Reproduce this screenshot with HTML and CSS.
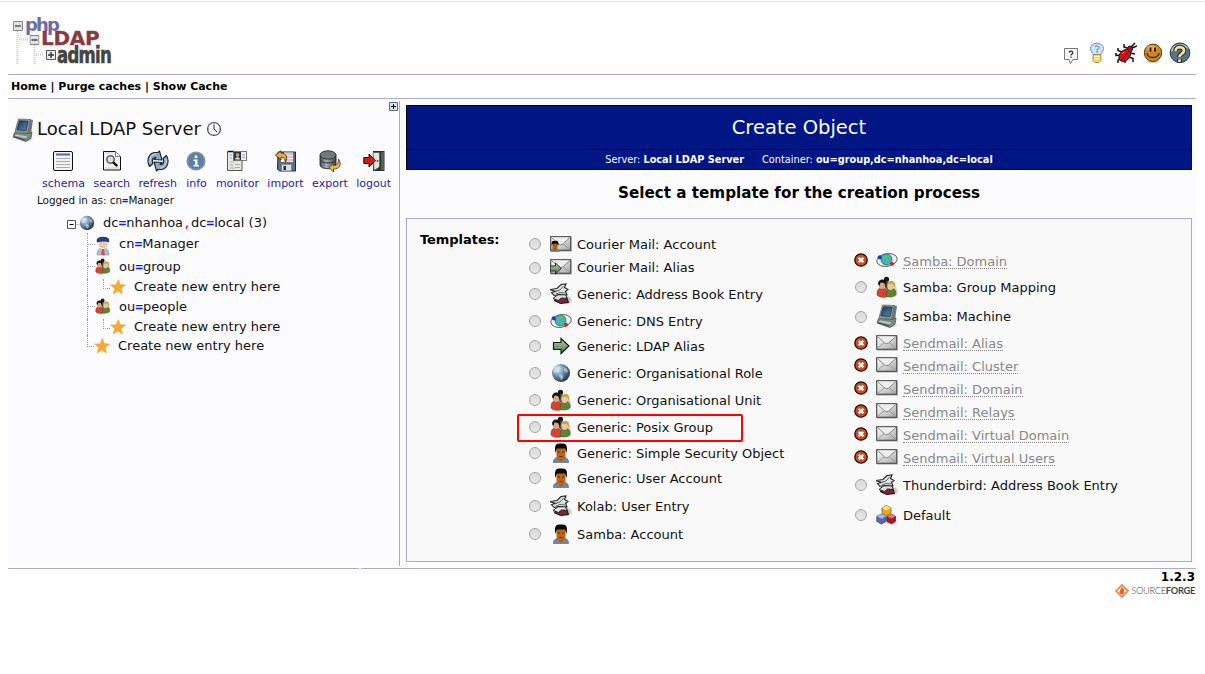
FILE: index.html
```html
<!DOCTYPE html>
<html lang="en">
<head>
<meta charset="utf-8">
<title>phpLDAPadmin</title>
<link rel="stylesheet" href="styles.css">
</head>
<body>
<svg class="sprite" aria-hidden="true">
<defs>
<radialGradient id="gGlobe" cx=".32" cy=".3" r=".8"><stop offset="0" stop-color="#dcecf8"/><stop offset=".45" stop-color="#6f8fb4"/><stop offset="1" stop-color="#142238"/></radialGradient>
<linearGradient id="gMail" x1="0" y1="0" x2="1" y2="1"><stop offset="0" stop-color="#fff"/><stop offset=".5" stop-color="#d5d5d5"/><stop offset="1" stop-color="#a5a5a5"/></linearGradient>
<linearGradient id="gArrow" x1="0" y1="0" x2="0" y2="1"><stop offset="0" stop-color="#b5d0ad"/><stop offset="1" stop-color="#4f7549"/></linearGradient>
<linearGradient id="gDisk" x1="0" y1="0" x2="1" y2="0"><stop offset="0" stop-color="#4c4f52"/><stop offset=".4" stop-color="#a9adb0"/><stop offset="1" stop-color="#404346"/></linearGradient>
<linearGradient id="gScreen" x1="0" y1="0" x2="1" y2="1"><stop offset="0" stop-color="#183a5e"/><stop offset="1" stop-color="#5b88b0"/></linearGradient>
<radialGradient id="gShade"><stop offset="0" stop-color="#000" stop-opacity=".4"/><stop offset="1" stop-color="#000" stop-opacity="0"/></radialGradient>
</defs>
<symbol id="server" viewBox="0 0 22 24"><ellipse cx="14" cy="21" rx="8" ry="3" fill="url(#gShade)"/><path d="M17 1l4 1-2 14-4 2z" fill="#6d7a78"/><path d="M6.500 1L18.500 1.500 15.500 15 3 13.500z" fill="#91a09e" stroke="#56615f" stroke-width=".7"/><path d="M7.500 2.800l8.700.4-2.300 9.500-9-1z" fill="url(#gScreen)" stroke="#17283a" stroke-width=".7"/><path d="M2.500 14.500l14 1 3.500-1.500-1 6-5 3.500L1 19z" fill="#7d8884" stroke="#3f4a48" stroke-width=".7"/><path d="M2.500 17.500l11 2.800 2-1.800-11.500-2z" fill="#c3ccc6"/><path d="M2 19l11.500 3" stroke="#35403f" stroke-width=".8"/></symbol>
<symbol id="schema" viewBox="0 0 22 22"><rect x="1.500" y="1.500" width="19" height="19" rx="1.500" fill="#f2f2ee" stroke="#111"/><path d="M4 4.500h14" stroke="#526b95" stroke-width="2"/><path d="M4 8.500h14M4 11.500h14M4 14.500h14M4 17.500h14" stroke="#aaa" stroke-width="1.200"/></symbol>
<symbol id="search" viewBox="0 0 22 22"><path d="M2.500 1.500h12l5 5v13.500h-17z" fill="#f4f4f0" stroke="#111"/><path d="M14.500 1.500v5h5" fill="#fff" stroke="#777"/><path d="M4 3h8M4 18h14" stroke="#ccc"/><circle cx="9.500" cy="9.500" r="3.700" fill="#d7e0e5" stroke="#666" stroke-width="1.600"/><path d="M12 12.200l4.300 4" stroke="#111" stroke-width="2.400"/></symbol>
<symbol id="refresh" viewBox="0 0 22 22"><g fill="#8fa9c0" stroke="#18222c" stroke-width="1.100" stroke-linejoin="round"><path d="M2.500 16.500C-1.500 9 3 2.500 8 2.500h3l1.500-1.500 2.500 9-8-.5 2-2c-3-.5-4.500 2-3 6z"/><path d="M19.500 5.500c4 7.500-.5 14-5.500 14h-3L9.500 21 7 12l8 .5-2 2c3 .5 4.500-2 3-6z"/></g><path d="M3 13c-1-5 2-9 6-9M19 9c1 5-2 9-6 9" fill="none" stroke="#d5e2ed" stroke-width=".9"/></symbol>
<symbol id="info" viewBox="0 0 22 22"><circle cx="11" cy="11" r="8.800" fill="#5b7fa9" stroke="#8d949b" stroke-width="1.600"/><circle cx="11" cy="6.700" r="1.500" fill="#fff"/><path d="M8.500 9.500h4V15H14v1.500H8.500V15H10v-4H8.500z" fill="#fff"/></symbol>
<symbol id="monitor" viewBox="0 0 22 22"><path d="M1.500 1.500h9v8.500h5.500v10.500h-14.500z" fill="#e7e7e2" stroke="#555"/><path d="M2 1.500h7" stroke="#111" stroke-width="1.500"/><rect x="7.500" y="1.500" width="13" height="9" fill="#efefea" stroke="#77776f"/><rect x="8" y="2" width="7" height="8" fill="#16354f"/><circle cx="11.500" cy="5" r="1.900" fill="#c79a6a"/><path d="M9 9.500c.5-3 4.500-3 5 0z" fill="#dde6ea"/><path d="M16 5h3M16 7.500h3M4 5h2M4 8h2M4 12h4M4 15h3M4 18h4M9 14.500h5M9 17.500h5" stroke="#aaa"/></symbol>
<symbol id="import" viewBox="0 0 22 22"><path d="M3 2h17.500v19H4.500L2.500 19z" fill="#55738b" stroke="#192a39"/><path d="M9 2.500h9V12H6V8z" fill="#fff"/><path d="M11 4h7M11 7h7M9 10h9" stroke="#e0777b"/><rect x="6.500" y="14.500" width="10" height="6.500" fill="#ddd" stroke="#888"/><rect x="8.500" y="16" width="2.500" height="4" fill="#234"/><path d="M.5 5L6 .8V3c5.500.2 7 4 4.500 9.500-.3-4-1.500-5.200-4.500-5.200V10z" fill="#e6ad45" stroke="#4c340c"/></symbol>
<symbol id="export" viewBox="0 0 22 22"><path d="M1 5v10c0 5 16 5 16 0V5z" fill="url(#gDisk)" stroke="#222" stroke-width=".8"/><path d="M1 9.500c1 4.500 15 4.500 16 0" fill="none" stroke="#333"/><ellipse cx="9" cy="5" rx="8" ry="4.200" fill="#737779" stroke="#222" stroke-width=".8"/><path d="M19.500 9c4 6 .5 10-5 10V22L10 17.500l4.500-4v2c3.500.2 5-2 5-6.500z" fill="#e9b652" stroke="#5c4014" stroke-width=".9"/></symbol>
<symbol id="logout" viewBox="0 0 22 22"><path d="M10 1h11.500v20H10z" fill="#26352a"/><path d="M18 2h3v18h-3z" fill="#4d634f"/><path d="M10 2.500h6.500V17L11 20.500z" fill="#e4e4df" stroke="#555" stroke-width=".7"/><circle cx="14.500" cy="11" r="1" fill="#555"/><path d="M.8 7.500H6V4l6.500 6.500L6 17v-3.500H.8z" fill="#cf1d17" stroke="#380504"/></symbol>
<symbol id="clock" viewBox="0 0 16 16"><circle cx="8" cy="8" r="6.500" fill="#f5f5f5" stroke="#555" stroke-width="1.200"/><path d="M8 3.500V8l3 3" fill="none" stroke="#333"/><path d="M8 2v1M2 8h1M13 8h1M8 13v1" stroke="#777"/></symbol>
<symbol id="globe" viewBox="0 0 20 20"><circle cx="10" cy="10" r="9" fill="url(#gGlobe)"/><path d="M3 5l3-2 3 .5 1 2-2 1.500-1 2.500-3 .5-1.500-2zM8 11l3 .5 1.500 2.500-2 3.500-2-3zM13 4l3 2 1.500 3-2 .5-2.500-2z" fill="#dfe7ea" opacity=".55"/></symbol>
<symbol id="manager" viewBox="0 0 16 20"><path d="M2 19c0-5 2-7 6-7s6 2 6 7z" fill="#b4bccb" stroke="#8993a6" stroke-width=".6"/><path d="M6 12l2 3 2-3z" fill="#fff"/><path d="M7 13h2l.8 6H6.200z" fill="#d84a47"/><circle cx="8" cy="7.500" r="4.800" fill="#f2c7a4"/><path d="M2 6.500C.5 1.500 5 .8 8 .8s7.500.7 6 5.700C11 5 6 5.500 2 6.500z" fill="#293d80"/></symbol>
<symbol id="group" viewBox="0 0 22 22"><ellipse cx="15" cy="15" rx="7.500" ry="7" fill="url(#gShade)"/><circle cx="10.500" cy="3.300" r="2.600" fill="#171717"/><path d="M6.500 9c.5-5 8-5 9 0l-4 5z" fill="#4b5256"/><path d="M1 19c0-6 1.500-7 5.500-7s5.500 3 5 8.500c-3 1.500-8.500 1-10.500-1.500z" fill="#d8432f" stroke="#782318" stroke-width=".5"/><path d="M10.500 20.500c-1-6 1-8 5-8s5 3 4.500 6.500c-2 2-6.500 2.500-9.500 1.500z" fill="#5c8433" stroke="#2f4d18" stroke-width=".5"/><ellipse cx="6" cy="9" rx="3.300" ry="4" fill="#dba681"/><path d="M2 8c0-5 6-6 8.500-2l-.5 5-2-4-3.500-.5L3.500 10z" fill="#171310"/><ellipse cx="14.500" cy="10" rx="3.200" ry="4" fill="#e9c898"/><path d="M11.300 8c.7-4.500 7.500-4.500 8 0v5l-2.500-5z" fill="#c9a64e"/></symbol>
<symbol id="star" viewBox="0 0 16 16"><path d="M8.600.5l1.500 5 5.400.4-4.300 3.500 1.200 5.600L8 12l-4.900 2.900 1.700-5.400L.5 6l5.400-.2z" fill="#f7aa2e" stroke="#efa02b" stroke-width=".5"/></symbol>
<symbol id="mail" viewBox="0 0 22 16"><rect x="1" y="1.500" width="21" height="14.500" fill="#000" opacity=".18"/><rect x=".7" y=".7" width="20" height="13.600" fill="url(#gMail)" stroke="#505050" stroke-width="1.200"/><path d="M1.500 13.500l7-6M20 13.500l-7-6" stroke="#999"/><path d="M1.500 1.500l7.200 6.500q2 1.500 4 0l7.200-6.500" fill="#eee" stroke="#888"/></symbol>
<symbol id="person" viewBox="0 0 16 20"><path d="M.5 19.500c0-4 2-5.500 7.500-5.500s7.500 1.500 7.500 5.500z" fill="#7087a0" stroke="#465b70" stroke-width=".6"/><path d="M4 15h8l-4 3.500z" fill="#a75715"/><rect x="3.500" y="3.500" width="9" height="13" rx="4" fill="#ba6518"/><path d="M2.500 10C.5 0 5 .5 8 .5s7.500-.5 5.500 9.500L12 5.500H4z" fill="#0b0806"/><path d="M4.700 9h2M9.300 9h2M6.500 13.500h3" stroke="#55290b" stroke-width="1.200"/></symbol>
<symbol id="mailuser" viewBox="0 0 22 16"><use href="#mail" width="22" height="16"/><use href="#person" x="0" y="4.500" width="10" height="11.500"/></symbol>
<symbol id="arrow" viewBox="0 0 18 18"><path d="M1.500 5.500H9V1.500l8 7.500-8 7.500v-4H1.500z" fill="url(#gArrow)" stroke="#172013" stroke-width="1.200"/></symbol>
<symbol id="mailarrow" viewBox="0 0 22 16"><use href="#mail" width="22" height="16"/><use href="#arrow" x="-1" y="3" width="13" height="13"/></symbol>
<symbol id="address" viewBox="0 0 22 22"><ellipse cx="17" cy="17" rx="6" ry="5" fill="url(#gShade)"/><path d="M4 17.500l4-3.500 8-1 2.500 6.500-8 1z" fill="#7d2438" stroke="#1a0b0e"/><path d="M3 15.500l5-4 7-.5 2.500 4.500-6-.5-3 2.500z" fill="#ddd" stroke="#222"/><path d="M-.5 6.500L7 5.500l4-4 5-.5-1.500 3.500 3.500 2-2.500 2 1.500 3.500-8-.5-5 1L1.500 9.500l4-1z" fill="#dde2df" stroke="#202322" stroke-width="1.100"/><path d="M5 8.500l5-1.500 3.500-4M6 11l4-1.500 5 .5" fill="none" stroke="#666"/></symbol>
<symbol id="dns" viewBox="0 0 22 16"><ellipse cx="11" cy="8" rx="10.300" ry="6.300" transform="rotate(-10 11 8)" fill="#f2f2f2" stroke="#555" stroke-width=".9"/><circle cx="10.500" cy="7.500" r="5.500" fill="#4ba9cf" stroke="#145c68" stroke-width=".7"/><path d="M6.500 4.500l4-2 3 2-2 3-3 0-1 2zM10.500 8.500l4 1-2 3-2-1z" fill="#47c66b"/><circle cx="3.800" cy="5.300" r="2.100" fill="#153ebd"/><circle cx="16" cy="11.800" r="2" fill="#cd2832"/></symbol>
<symbol id="bad" viewBox="0 0 14 14"><circle cx="7" cy="7" r="6.200" fill="#d34a20" stroke="#16110f" stroke-width="1.300"/><path d="M4.700 4.700l4.600 4.600m0-4.600L4.700 9.300" stroke="#fff" stroke-width="2.300"/></symbol>
<symbol id="cubes" viewBox="0 0 22 20"><ellipse cx="15" cy="17" rx="7" ry="3" fill="url(#gShade)"/><g stroke-width=".7"><path d="M10.500.5l4.500 2.500v5l-4.500 2.500L6 8V3z" fill="#efaa16" stroke="#7d5708"/><path d="M10.500.7L15 3l-4.500 2.500L6 3z" fill="#ffe17c"/><path d="M5.500 9l4.700 2.300v5l-4.700 2.800-4.700-2.800v-5z" fill="#5968bc" stroke="#222f77"/><path d="M5.500 9l4.700 2.300-4.700 2.500-4.700-2.500z" fill="#a8b3ee"/><path d="M15.500 9l4 2.300v5l-4 2.500-4.500-2.500v-5z" fill="#a91930" stroke="#590c19"/><path d="M15.500 9l4 2.300-4 2.200-4.500-2.200z" fill="#e87b7d"/></g></symbol>
<symbol id="bubble" viewBox="0 0 16 18"><path d="M1.500 1.500h13v11H10L7.500 16.500 6 12.500H1.500z" fill="#f5f5f5" stroke="#777"/><path d="M6 5.500c.5-2 4-1.500 3.800.5-.2 1-1.800 1-1.800 2.400M8 9.500v1.300" fill="none" stroke="#333" stroke-width="1.300"/></symbol>
<symbol id="bulb" viewBox="0 0 16 22"><path d="M4.500 13C4 11 1.500 9.500 1.500 6.500c0-7 13-7 13 0 0 3-2.500 4.500-3 6.500z" fill="#cfe3f8" stroke="#6f93bf"/><path d="M6 5c1-2 5-1 4 1L8 8v3" fill="none" stroke="#7899c4" stroke-width="1.200"/><path d="M4 12.500h8v6L10 20.500H6l-2-2z" fill="#f0d36a" stroke="#987d28" stroke-width=".8"/><path d="M5 14.500h6M5 17h6" stroke="#fff5b6"/></symbol>
<symbol id="bug" viewBox="0 0 22 22"><path d="M7 10L3 8.500V6M6 13l-5 .5V11M7 17l-4 1v3M12 6l-3-1V2M15 11l5 1M14 15l4 1.500V20M16 5l4-4M17 6l5-2M10 18v3" fill="none" stroke="#111" stroke-width="1.500"/><path d="M4 17c-1-5 3-9 8-10l4 3c0 5-5 11-10 9z" fill="#dc0d16" stroke="#28060a"/><path d="M12.500 7.500c-1-4 5-5 5 0l-2 3z" fill="#bc0711" stroke="#170304"/><path d="M7 18l6-8" stroke="#2b0507"/><path d="M7 12l2-2" stroke="#ff989b"/></symbol>
<symbol id="smile" viewBox="0 0 20 20"><ellipse cx="10" cy="18.500" rx="9" ry="2" fill="url(#gShade)"/><circle cx="10" cy="9.800" r="8.700" fill="#c98a26" stroke="#5d3507"/><ellipse cx="8.500" cy="5" rx="5" ry="3" fill="#f8c261" opacity=".6"/><path d="M7.500 4.500v4M12 4.500v4" stroke="#261503" stroke-width="1.800"/><path d="M4 10c1 6 11 6 12 0" fill="none" stroke="#3d2205" stroke-width="1.400"/></symbol>
<symbol id="help" viewBox="0 0 22 22"><circle cx="11" cy="10.800" r="9.800" fill="#56748a" stroke="#243745"/><path d="M2 10c0-9 14-11 18-3-7-3-12-1-18 3z" fill="#adc0cc"/><path d="M6.500 9c0-5.500 9-5 8.500 0-.3 3-4.500 2.700-4.500 6M10.500 17v3.500" fill="none" stroke="#28241b" stroke-width="4.800"/><path d="M6.500 9c0-5.500 9-5 8.500 0-.3 3-4.500 2.700-4.500 6M10.500 17.300v2.700" fill="none" stroke="#efe1a6" stroke-width="2.700"/></symbol>
<symbol id="sf" viewBox="0 0 14 14"><path d="M7 1L13 7 7 13 1 7z" fill="#fff" stroke="#f28b52" stroke-width="1.800"/><path d="M7 3c3 3 3.200 7-.2 7.500C3.500 10 4 7 7 3z" fill="#ed641d"/></symbol>
<symbol id="boxminus" viewBox="0 0 10 10"><path d="M.5.500h9v9h-9z" fill="#e2e2e2" stroke="#888"/><path d="M2 5h6" stroke="#444" stroke-width="1.300"/></symbol>
<symbol id="boxplus" viewBox="0 0 10 10"><path d="M.5.500h9v9h-9z" fill="#eee" stroke="#555"/><path d="M2 5h6M5 2v6" stroke="#333" stroke-width="1.500"/></symbol>
</svg>

<header class="top">
  <div class="logo">
    <svg class="logo-tree" viewBox="0 0 46 50"><path d="M5.500 15v33M22.500 29v19M7 23.500h10M24 38.500h8" stroke="#ccc" stroke-width="2" stroke-dasharray="1 1"/><use href="#boxminus" x="1" y="5" width="10" height="10"/><use href="#boxminus" x="17.500" y="19" width="10" height="10"/><use href="#boxplus" x="34" y="34" width="10" height="10"/></svg>
    <span class="logo-php">php</span><span class="logo-ldap">LDAP</span><span class="logo-admin">admin</span>
  </div>
  <div class="top-icons">
    <svg class="i-bubble"><use href="#bubble"/></svg><svg class="i-bulb"><use href="#bulb"/></svg><svg class="i-bug"><use href="#bug"/></svg><svg class="i-smile"><use href="#smile"/></svg><svg class="i-help"><use href="#help"/></svg>
  </div>
</header>
<nav class="menu">Home | Purge caches | Show Cache</nav>
<div class="columns">
  <aside class="side">
    <div class="expand"><svg viewBox="0 0 9 9"><path d="M.5.500h8v8h-8z" fill="#d8e6ea" stroke="#667"/><path d="M2 4.500h5M4.500 2v5" stroke="#000"/></svg></div>
    <div class="server-title"><svg class="i-server"><use href="#server"/></svg><span>Local LDAP Server</span><svg class="i-clock"><use href="#clock"/></svg></div>
    <div class="tools">
      <a><svg><use href="#schema"/></svg>schema</a>
      <a><svg><use href="#search"/></svg>search</a>
      <a><svg><use href="#refresh"/></svg>refresh</a>
      <a><svg><use href="#info"/></svg>info</a>
      <a><svg><use href="#monitor"/></svg>monitor</a>
      <a><svg><use href="#import"/></svg>import</a>
      <a><svg><use href="#export"/></svg>export</a>
      <a><svg><use href="#logout"/></svg>logout</a>
    </div>
    <div class="logged">Logged in as: cn<b>=</b>Manager</div>
    <div class="tree">
      <div class="node root"><svg class="toggle" viewBox="0 0 12 10"><path d="M.5.500h8v8h-8z" fill="#fff" stroke="#555"/><path d="M2.500 4.500h4" stroke="#000"/><path d="M9.500 4.500h3" stroke="#999" stroke-dasharray="1 1"/></svg><svg class="i16"><use href="#globe"/></svg><span>dc<b>=</b>nhanhoa<i>,</i>dc<b>=</b>local (3)</span></div>
      <div class="node mid"><u class="guide"></u><svg class="i-manager"><use href="#manager"/></svg><span>cn<b>=</b>Manager</span></div>
      <div class="node mid"><u class="guide"></u><svg class="i16 raise"><use href="#group"/></svg><span>ou<b>=</b>group</span></div>
      <div class="node sub"><u class="line"></u><u class="guide last"></u><svg class="i16"><use href="#star"/></svg><span>Create new entry here</span></div>
      <div class="node mid"><u class="guide"></u><svg class="i16 raise"><use href="#group"/></svg><span>ou<b>=</b>people</span></div>
      <div class="node sub"><u class="line"></u><u class="guide last"></u><svg class="i16"><use href="#star"/></svg><span>Create new entry here</span></div>
      <div class="node end"><u class="guide last"></u><svg class="i16"><use href="#star"/></svg><span>Create new entry here</span></div>
    </div>
  </aside>
  <main class="main">
    <h1>Create Object</h1>
    <div class="context"><span>Server: <strong>Local LDAP Server</strong></span><span>Container: <strong>ou=group,dc=nhanhoa,dc=local</strong></span></div>
    <h2>Select a template for the creation process</h2>
    <section class="templates">
      <div class="legend">Templates:</div>
      <div class="list left">
        <label><u class="radio"></u><svg class="m"><use href="#mailuser"/></svg><span>Courier Mail: Account</span></label>
        <label><u class="radio"></u><svg class="m"><use href="#mailarrow"/></svg><span>Courier Mail: Alias</span></label>
        <label><u class="radio"></u><svg class="b"><use href="#address"/></svg><span>Generic: Address Book Entry</span></label>
        <label><u class="radio"></u><svg class="m"><use href="#dns"/></svg><span>Generic: DNS Entry</span></label>
        <label><u class="radio"></u><svg class="s"><use href="#arrow"/></svg><span>Generic: LDAP Alias</span></label>
        <label><u class="radio"></u><svg class="g"><use href="#globe"/></svg><span>Generic: Organisational Role</span></label>
        <label><u class="radio"></u><svg class="b"><use href="#group"/></svg><span>Generic: Organisational Unit</span></label>
        <label class="marked"><u class="radio"></u><svg class="b"><use href="#group"/></svg><span>Generic: Posix Group</span></label>
        <label><u class="radio"></u><svg class="p"><use href="#person"/></svg><span>Generic: Simple Security Object</span></label>
        <label><u class="radio"></u><svg class="p"><use href="#person"/></svg><span>Generic: User Account</span></label>
        <label><u class="radio"></u><svg class="b"><use href="#address"/></svg><span>Kolab: User Entry</span></label>
        <label><u class="radio"></u><svg class="p"><use href="#person"/></svg><span>Samba: Account</span></label>
      </div>
      <div class="list right">
        <label class="off"><svg class="x"><use href="#bad"/></svg><svg class="m"><use href="#dns"/></svg><span>Samba: Domain</span></label>
        <label><u class="radio"></u><svg class="b"><use href="#group"/></svg><span>Samba: Group Mapping</span></label>
        <label><u class="radio"></u><svg class="t"><use href="#server"/></svg><span>Samba: Machine</span></label>
        <label class="off"><svg class="x"><use href="#bad"/></svg><svg class="m"><use href="#mail"/></svg><span>Sendmail: Alias</span></label>
        <label class="off"><svg class="x"><use href="#bad"/></svg><svg class="m"><use href="#mail"/></svg><span>Sendmail: Cluster</span></label>
        <label class="off"><svg class="x"><use href="#bad"/></svg><svg class="m"><use href="#mail"/></svg><span>Sendmail: Domain</span></label>
        <label class="off"><svg class="x"><use href="#bad"/></svg><svg class="m"><use href="#mail"/></svg><span>Sendmail: Relays</span></label>
        <label class="off"><svg class="x"><use href="#bad"/></svg><svg class="m"><use href="#mail"/></svg><span>Sendmail: Virtual Domain</span></label>
        <label class="off"><svg class="x"><use href="#bad"/></svg><svg class="m"><use href="#mail"/></svg><span>Sendmail: Virtual Users</span></label>
        <label><u class="radio"></u><svg class="b"><use href="#address"/></svg><span>Thunderbird: Address Book Entry</span></label>
        <label><u class="radio"></u><svg class="c"><use href="#cubes"/></svg><span>Default</span></label>
      </div>
    </section>
  </main>
</div>
<div class="rules"><u></u><u></u></div>
<footer><div class="version">1.2.3</div><div class="forge"><svg><use href="#sf"/></svg><span>SOURCE<b>FORGE</b></span></div></footer>
</body>
</html>
```
FILE: styles.css
```css
*, *::before, *::after { box-sizing: border-box; }
body { margin: 0; padding: 0 9px 0 8px; height: 674px; overflow: hidden; background: linear-gradient(#e4e4ee, #e4e4ee) 0 1px / 100% 1px no-repeat #fff; font: 13px/16px "DejaVu Sans", sans-serif; color: #111; }
svg { display: block; flex: none; overflow: visible; }
u { text-decoration: none; display: block; flex: none; }
.sprite { position: absolute; width: 0; height: 0; }
.top { height: 75px; border-bottom: 1px solid #aaaacc; display: flex; justify-content: space-between; align-items: flex-start; }
.logo { position: relative; width: 110px; height: 52px; margin: 16px 0 0 4px; }
.logo-tree { width: 46px; height: 50px; }
.logo span { position: absolute; white-space: nowrap; font-weight: bold; }
.logo-php { left: 13px; top: 1px; font-size: 18px; line-height: 15px; color: #6c6ca8; letter-spacing: -1.8px; }
.logo-ldap { left: 29px; top: 15px; font-size: 20px; line-height: 15px; color: #8a3b42; letter-spacing: -.3px; -webkit-text-stroke: .3px #8a3b42; }
.logo-admin { left: 45px; top: 31px; font-size: 23px; line-height: 16px; color: #444; transform: scaleX(.72); transform-origin: 0 0; letter-spacing: -1px; -webkit-text-stroke: .6px #444; }
.top-icons { display: flex; gap: 6px; align-items: center; margin: 42px 5px 0 0; }
.i-bubble { width: 16px; height: 18px; position: relative; left: -2px; top: 3px; }
.i-bulb { width: 16px; height: 22px; margin: 0 4px 0 2px; }
.i-bug { width: 22px; height: 22px; }
.i-smile { width: 20px; height: 20px; }
.i-help { width: 22px; height: 22px; }
.menu { height: 24px; border-bottom: 1px solid #aaaacc; padding-left: 3px; font: bold 11px/23px "DejaVu Sans", sans-serif; color: #000; }
.columns { display: flex; height: 467px; padding-top: 2px; background: #fcfcfe; }
.side { width: 392px; border-right: 1px solid #aaaacc; display: flex; flex-direction: column; }
.expand { height: 15px; padding: 1px 1px 0 0; display: flex; justify-content: flex-end; }
.expand svg { width: 9px; height: 9px; }
.server-title { height: 25px; display: flex; align-items: center; padding-left: 4px; font-size: 18px; line-height: 24px; }
.i-server { width: 22px; height: 24px; margin-right: 3px; position: relative; top: 1px; }
.i-clock { width: 16px; height: 16px; margin-left: 5px; }
.tools { display: flex; justify-content: space-between; margin: 9px 8px 0 34px; font-size: 11px; line-height: 14px; color: #1c1ca8; }
.tools a { display: flex; flex-direction: column; align-items: center; gap: 5px; }
.tools svg { width: 22px; height: 22px; }
.logged { margin: 2px 0 0 29px; height: 19px; font-size: 10.4px; line-height: 15px; }
.logged b, .tree b { color: #0a1eff; font-family: "DejaVu Sans Mono", monospace; font-weight: bold; line-height: 1; }
.tree i { color: #f00; font-style: normal; font-family: "DejaVu Sans Mono", monospace; line-height: 1; }
.tree { display: grid; grid-template-rows: 21px 22px 24px 16px 24px 16px 22px; margin-left: 59px; }
.node { display: flex; align-items: center; }
.i16 { width: 16px; height: 16px; }
.raise { position: relative; top: -1px; }
.i-manager { width: 16px; height: 20px; position: relative; top: 2px; }
.toggle { width: 12px; height: 10px; position: relative; top: 2px; }
.root span { margin-left: 8px; }
.mid, .end, .sub { padding-left: 20px; }
.mid span, .sub span, .end span { margin-left: 8px; }
.line { align-self: stretch; width: 16px; border-left: 1px dotted #999; }
.guide { align-self: stretch; width: 8px; border-left: 1px dotted #999; display: grid; grid-template-rows: 12px 1fr; }
.guide::before { content: ""; border-bottom: 1px dotted #999; }
.guide.last { width: 7px; border-left: 0; }
.guide.last::before { border-left: 1px dotted #999; }
.sub .guide.last { grid-template-rows: 10px 1fr; }
.main { flex: 1; padding: 4px 4px 0 6px; }
h1 { margin: 0; height: 45px; border: 1px solid #000; background: #001684; color: #fff; text-align: center; font: 19.5px/43px "DejaVu Sans", sans-serif; }
.context { height: 20px; border: 1px solid #000; border-top: 0; background: #001684; color: #fff; display: flex; justify-content: center; gap: 18px; font-size: 9.75px; line-height: 19px; }
h2 { margin: 0; height: 48px; text-align: center; font: bold 15.2px/47px "DejaVu Sans", sans-serif; color: #000; }
.templates { height: 344px; border: 1px solid #aaaacc; background: #f9f9f9; padding: 13px 0 0 13px; display: grid; grid-template-columns: 109px 326px 1fr; align-items: start; color: #111; }
.legend { font-size: 13px; letter-spacing: -.05px; font-weight: bold; color: #000; }
.list { display: grid; }
.left { grid-template-rows: 25px 22px 31px 23px 27px 27px 27px 27px 25px 25px 31px 25px; }
.right { margin-top: 17px; grid-template-rows: 24px 29px 30px 23px 22px 24px 22px 24px 22px 33px 27px; }
label { display: grid; grid-template-columns: 12px 40px 1fr; align-items: center; position: relative; white-space: nowrap; }
label > svg:not(.x) { justify-self: center; }
label span { justify-self: start; margin-left: -4px; }
.radio { width: 12px; height: 12px; border: 1px solid #a4a4a4; border-radius: 50%; background: linear-gradient(#d9d9d9, #e8e8e8); margin-bottom: 1px; }
.m { width: 22px; height: 16px; position: relative; top: -1px; }
.b { width: 22px; height: 22px; position: relative; top: -1px; }
.s { width: 18px; height: 18px; position: relative; top: -1px; }
.g { width: 20px; height: 20px; position: relative; top: -1px; }
.p { width: 16px; height: 20px; position: relative; top: -1px; }
.t { width: 22px; height: 24px; position: relative; top: -1px; }
.c { width: 22px; height: 20px; position: relative; top: -1px; }
.x { width: 14px; height: 14px; position: relative; left: -1px; top: -1px; }
.off span { color: #888; height: 15px; line-height: 16px; border-bottom: 1px dotted #888; }
.marked::after { content: ""; position: absolute; left: -12px; top: 0; width: 226px; height: 28px; border: 2px solid #ff0000; border-radius: 2px; }
.rules { display: flex; gap: 2px; height: 3px; padding-top: 2px; }
.rules u { width: 351px; height: 1px; background: #aaaacc; }
.rules u + u { flex: 1; }
footer { display: flex; flex-direction: column; align-items: flex-end; padding-right: 1px; }
.version { font: bold 12px/16px "DejaVu Sans", sans-serif; color: #000; }
.forge { display: flex; align-items: center; gap: 2px; height: 12px; font: 300 9.3px/12px Lato, sans-serif; letter-spacing: -.3px; color: #444; }
.forge b { font-weight: bold; }
.forge svg { width: 14px; height: 14px; }
```
